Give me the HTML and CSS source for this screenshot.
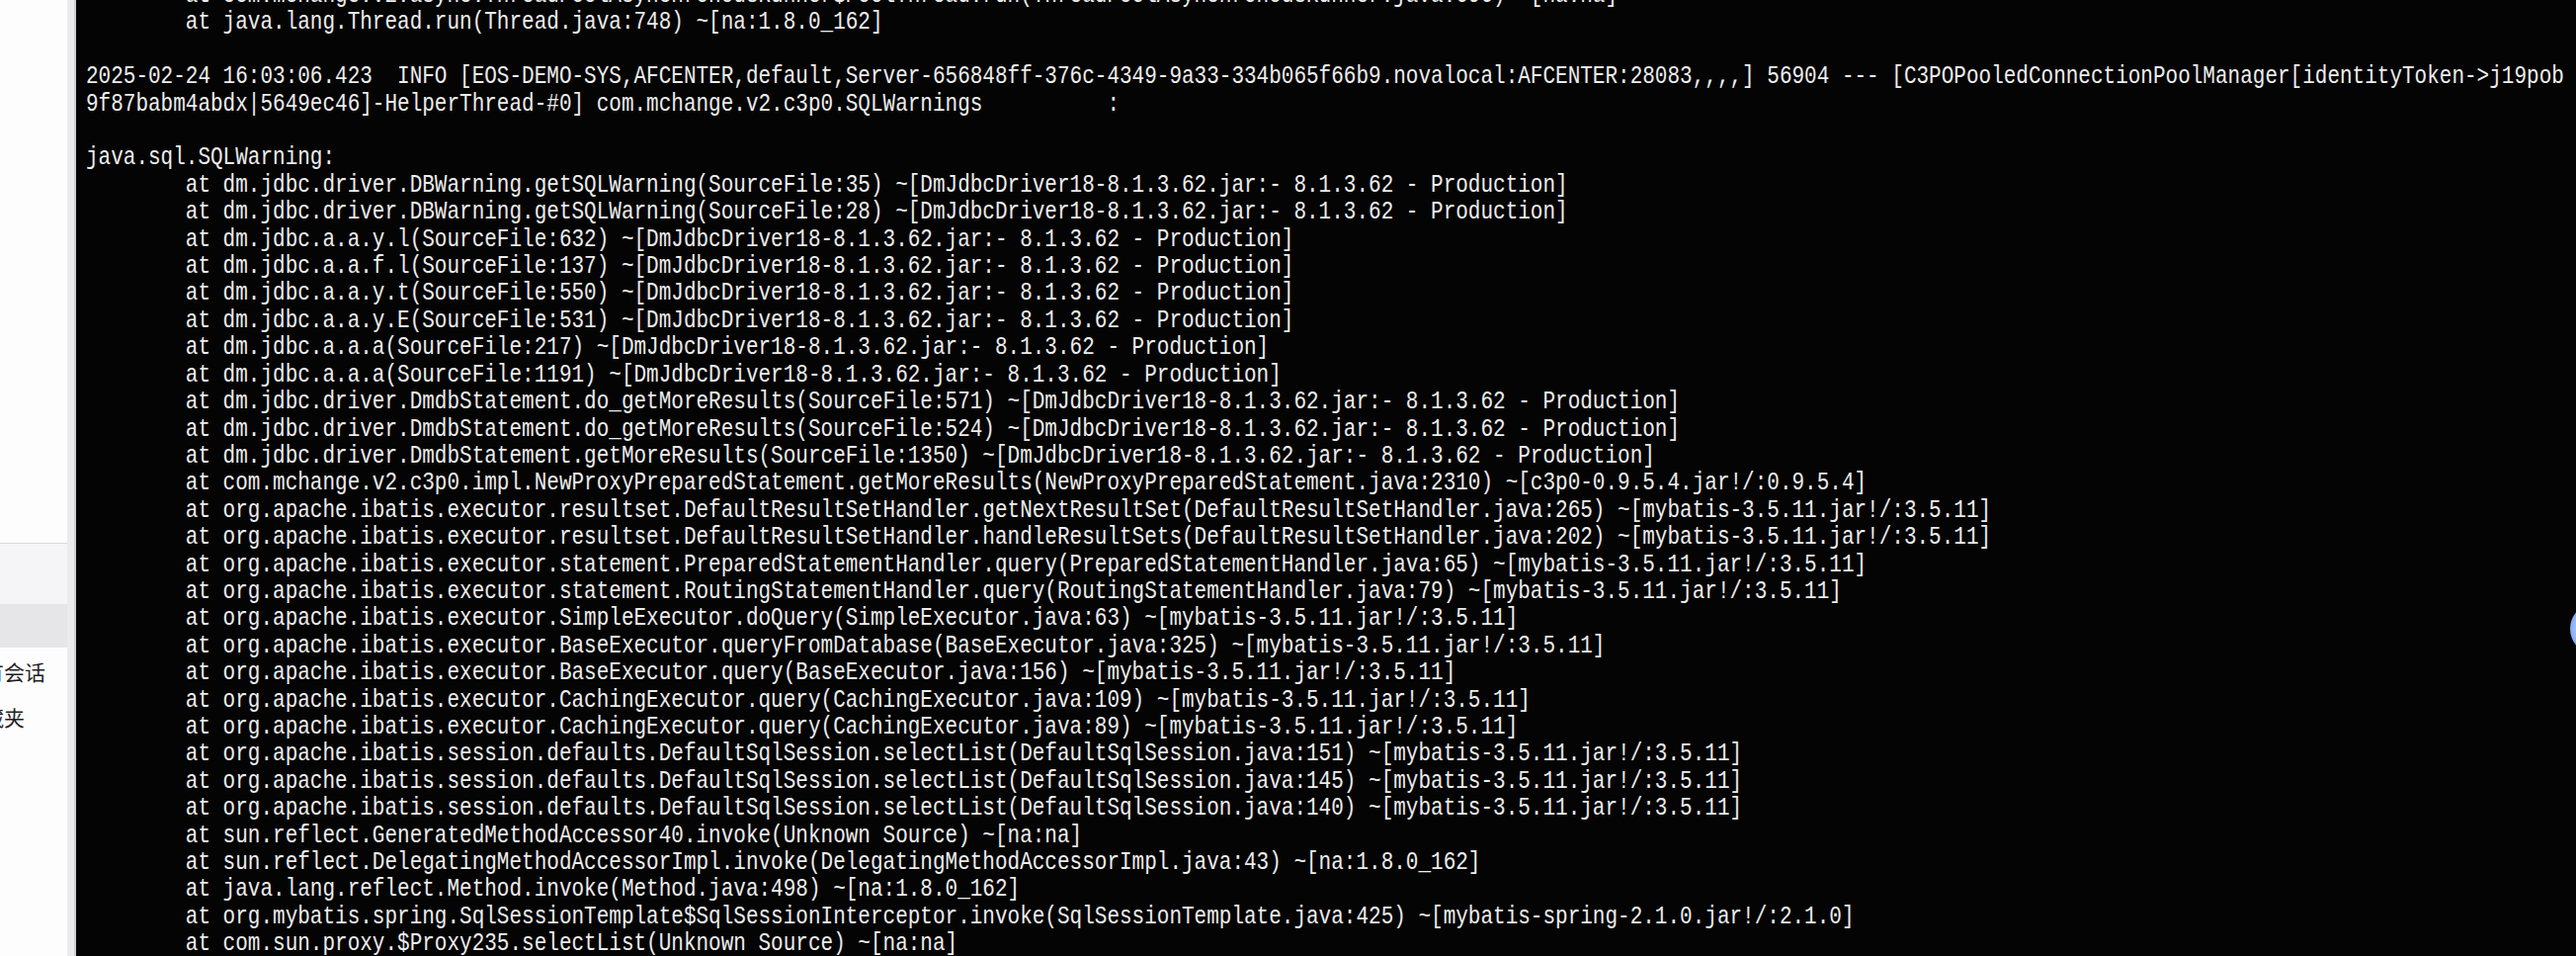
FILE: index.html
```html
<!DOCTYPE html>
<html lang="zh-CN">

<head>
    <meta charset="UTF-8">
    <meta name="viewport" content="width=device-width, initial-scale=1.0">
    <title>console</title>

    <link rel="stylesheet" href="styles.css">
</head>

<body>

    <div class="screen">

        <!-- SIDEBAR (sessions panel, cut off at the left) -->
        <aside class="sidebar">
            <div class="sidebar__top"></div>
            <div class="sidebar__group"></div>
            <div class="sidebar__tab"></div>
            <ul class="sidebar__list">
                <li class="sidebar__item">所有会话</li>
                <li class="sidebar__item">收藏夹</li>
            </ul>
        </aside>
        <!-- END SIDEBAR -->

        <!-- CONSOLE -->
        <main class="console">
<pre class="console__text">        at com.mchange.v2.async.ThreadPoolAsynchronousRunner$PoolThread.run(ThreadPoolAsynchronousRunner.java:696) ~[na:na]
        at java.lang.Thread.run(Thread.java:748) ~[na:1.8.0_162]

2025-02-24 16:03:06.423  INFO [EOS-DEMO-SYS,AFCENTER,default,Server-656848ff-376c-4349-9a33-334b065f66b9.novalocal:AFCENTER:28083,,,,] 56904 --- [C3POPooledConnectionPoolManager[identityToken-&gt;j19pob
9f87babm4abdx|5649ec46]-HelperThread-#0] com.mchange.v2.c3p0.SQLWarnings          :

java.sql.SQLWarning:
        at dm.jdbc.driver.DBWarning.getSQLWarning(SourceFile:35) ~[DmJdbcDriver18-8.1.3.62.jar:- 8.1.3.62 - Production]
        at dm.jdbc.driver.DBWarning.getSQLWarning(SourceFile:28) ~[DmJdbcDriver18-8.1.3.62.jar:- 8.1.3.62 - Production]
        at dm.jdbc.a.a.y.l(SourceFile:632) ~[DmJdbcDriver18-8.1.3.62.jar:- 8.1.3.62 - Production]
        at dm.jdbc.a.a.f.l(SourceFile:137) ~[DmJdbcDriver18-8.1.3.62.jar:- 8.1.3.62 - Production]
        at dm.jdbc.a.a.y.t(SourceFile:550) ~[DmJdbcDriver18-8.1.3.62.jar:- 8.1.3.62 - Production]
        at dm.jdbc.a.a.y.E(SourceFile:531) ~[DmJdbcDriver18-8.1.3.62.jar:- 8.1.3.62 - Production]
        at dm.jdbc.a.a.a(SourceFile:217) ~[DmJdbcDriver18-8.1.3.62.jar:- 8.1.3.62 - Production]
        at dm.jdbc.a.a.a(SourceFile:1191) ~[DmJdbcDriver18-8.1.3.62.jar:- 8.1.3.62 - Production]
        at dm.jdbc.driver.DmdbStatement.do_getMoreResults(SourceFile:571) ~[DmJdbcDriver18-8.1.3.62.jar:- 8.1.3.62 - Production]
        at dm.jdbc.driver.DmdbStatement.do_getMoreResults(SourceFile:524) ~[DmJdbcDriver18-8.1.3.62.jar:- 8.1.3.62 - Production]
        at dm.jdbc.driver.DmdbStatement.getMoreResults(SourceFile:1350) ~[DmJdbcDriver18-8.1.3.62.jar:- 8.1.3.62 - Production]
        at com.mchange.v2.c3p0.impl.NewProxyPreparedStatement.getMoreResults(NewProxyPreparedStatement.java:2310) ~[c3p0-0.9.5.4.jar!/:0.9.5.4]
        at org.apache.ibatis.executor.resultset.DefaultResultSetHandler.getNextResultSet(DefaultResultSetHandler.java:265) ~[mybatis-3.5.11.jar!/:3.5.11]
        at org.apache.ibatis.executor.resultset.DefaultResultSetHandler.handleResultSets(DefaultResultSetHandler.java:202) ~[mybatis-3.5.11.jar!/:3.5.11]
        at org.apache.ibatis.executor.statement.PreparedStatementHandler.query(PreparedStatementHandler.java:65) ~[mybatis-3.5.11.jar!/:3.5.11]
        at org.apache.ibatis.executor.statement.RoutingStatementHandler.query(RoutingStatementHandler.java:79) ~[mybatis-3.5.11.jar!/:3.5.11]
        at org.apache.ibatis.executor.SimpleExecutor.doQuery(SimpleExecutor.java:63) ~[mybatis-3.5.11.jar!/:3.5.11]
        at org.apache.ibatis.executor.BaseExecutor.queryFromDatabase(BaseExecutor.java:325) ~[mybatis-3.5.11.jar!/:3.5.11]
        at org.apache.ibatis.executor.BaseExecutor.query(BaseExecutor.java:156) ~[mybatis-3.5.11.jar!/:3.5.11]
        at org.apache.ibatis.executor.CachingExecutor.query(CachingExecutor.java:109) ~[mybatis-3.5.11.jar!/:3.5.11]
        at org.apache.ibatis.executor.CachingExecutor.query(CachingExecutor.java:89) ~[mybatis-3.5.11.jar!/:3.5.11]
        at org.apache.ibatis.session.defaults.DefaultSqlSession.selectList(DefaultSqlSession.java:151) ~[mybatis-3.5.11.jar!/:3.5.11]
        at org.apache.ibatis.session.defaults.DefaultSqlSession.selectList(DefaultSqlSession.java:145) ~[mybatis-3.5.11.jar!/:3.5.11]
        at org.apache.ibatis.session.defaults.DefaultSqlSession.selectList(DefaultSqlSession.java:140) ~[mybatis-3.5.11.jar!/:3.5.11]
        at sun.reflect.GeneratedMethodAccessor40.invoke(Unknown Source) ~[na:na]
        at sun.reflect.DelegatingMethodAccessorImpl.invoke(DelegatingMethodAccessorImpl.java:43) ~[na:1.8.0_162]
        at java.lang.reflect.Method.invoke(Method.java:498) ~[na:1.8.0_162]
        at org.mybatis.spring.SqlSessionTemplate$SqlSessionInterceptor.invoke(SqlSessionTemplate.java:425) ~[mybatis-spring-2.1.0.jar!/:2.1.0]
        at com.sun.proxy.$Proxy235.selectList(Unknown Source) ~[na:na]</pre>
        </main>
        <!-- END CONSOLE -->

        <!-- floating assistant ball on the right edge -->
        <div class="edge-ball"></div>

    </div>

</body>
</html>
```

FILE: styles.css
```css
html,
body {
    margin: 0;
    height: 100%;
    overflow: hidden;
    background-color: #050505;
}

.screen {
    display: flex;
    height: 967px;
    position: relative;
    overflow: hidden;
}

/* Sidebar */

.sidebar {
    width: 68px;
    flex: none;
    background-color: #fdfdfd;
    border-right: 7px solid #ebebed;
    box-shadow: 2px 0 0 #cfcfd3;
    overflow: hidden;
    position: relative;
    z-index: 1;
}

.sidebar__top {
    height: 549px;
}

.sidebar__group {
    height: 61px;
    border-top: 1px solid #d8d8dc;
    background-color: #f5f5f7;
}

.sidebar__tab {
    height: 44px;
    background-color: #e6e6e9;
}

.sidebar__list {
    list-style: none;
    margin: 0 0 0 -38px;
    padding: 1px 0 0;
}

.sidebar__item {
    height: 46px;
    line-height: 46px;
    white-space: nowrap;
    font-family: "Noto Sans CJK SC", sans-serif;
    font-size: 21px;
    color: #1f1f1f;
}

/* Console */

.console {
    flex: 1;
    min-width: 0;
    padding-left: 11.5px;
    background-color: #040404;
    overflow: hidden;
}

.console__text {
    margin: -18px 0 0;
    font-family: "Liberation Mono", monospace;
    font-size: 26px;
    line-height: 27.4px;
    color: #ededed;
    white-space: pre;
    transform: scaleX(0.8077);
    transform-origin: 0 0;
}

/* Edge ball */

.edge-ball {
    position: absolute;
    left: 2601px;
    top: 610px;
    width: 52px;
    height: 52px;
    border-radius: 50%;
    background: radial-gradient(circle, #e3ecfc 0%, #b8cdf8 45%, #6d9cf1 80%);
}
```
